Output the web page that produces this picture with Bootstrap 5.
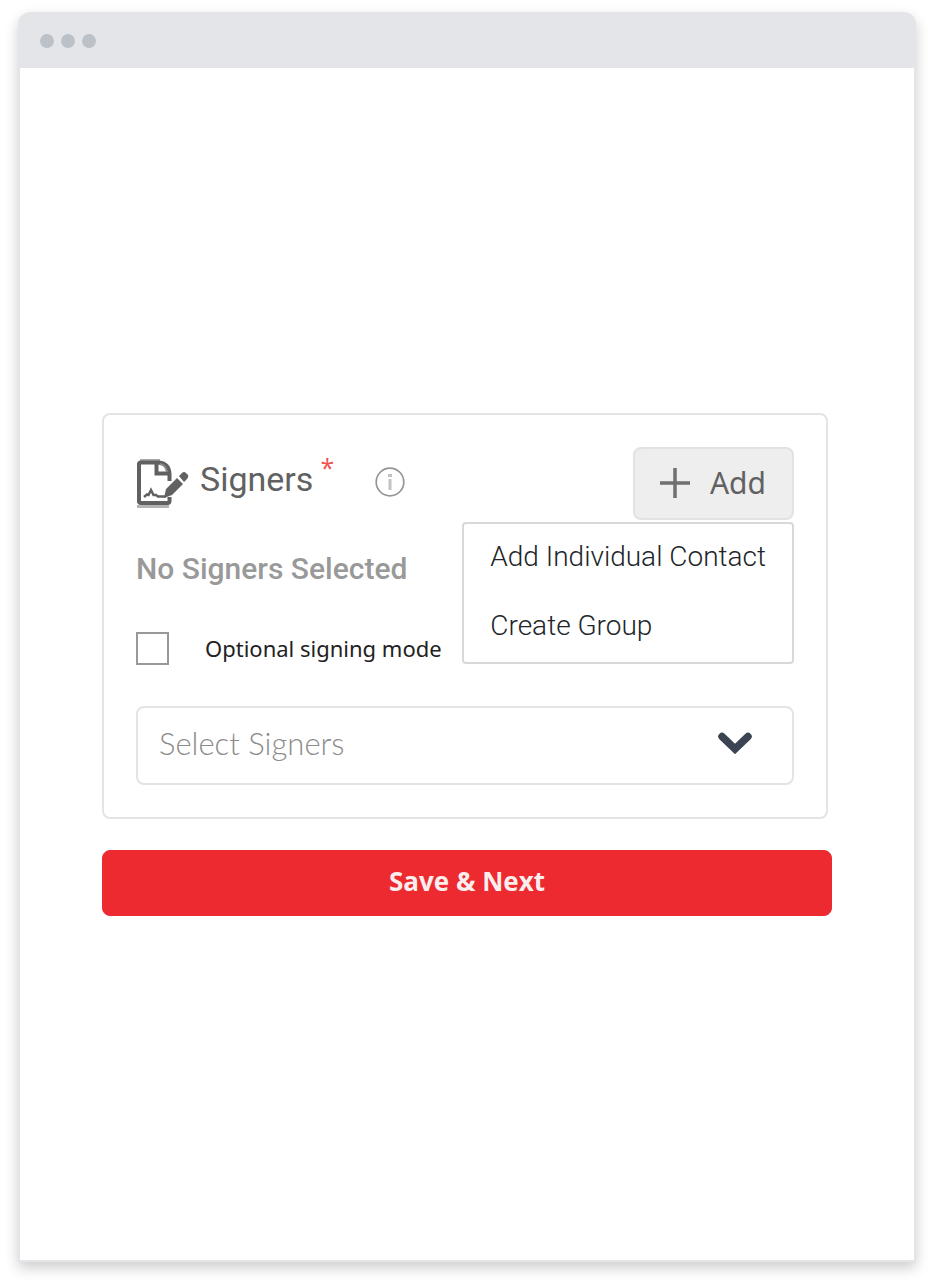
<!DOCTYPE html>
<html lang="en">
<head>
<meta charset="utf-8">
<meta name="viewport" content="width=device-width, initial-scale=1">
<title>Signers</title>
<link href="https://cdn.jsdelivr.net/npm/bootstrap@5.3.0/dist/css/bootstrap.min.css" rel="stylesheet">
<style>
  body { font-family: "Open Sans", "Noto Sans", sans-serif; background: #fff; }
  .page { min-height: 100vh; padding: 12px 18px 24px; }
  .window { border-radius: 12px 12px 0 0; border: 2px solid #e4e5e9; border-top: 0; box-shadow: 0 6px 14px rgba(0, 0, 0, .2); }
  .window-bar { height: 56px; background: #e4e5e9; padding: 2px 20px 0; gap: 7px; border-radius: 10px 10px 0 0; }
  .dot { width: 14px; height: 14px; background: #bcc1c8; }
  .window-body { padding: 32px 82px; gap: 31px; }
  .signers { border: 2px solid #e4e4e4; border-radius: 8px; padding: 32px; }
  .title-row { padding-top: 12px; }
  .heading { font-family: Roboto, sans-serif; font-size: 34px; line-height: 40px; color: #616161; margin-left: 11px; }
  .star { font-size: 25px; line-height: 16px; color: #ef5350; margin-left: 7px; }
  .info-icon { margin: 8px 0 0 41px; }
  .btn-add { font-family: "Noto Sans", sans-serif; font-size: 30px; line-height: 40px; padding: 14px 26px 15px 25px; gap: 20px; color: #616161; background: #eee; border: 2px solid #e2e2e2; border-radius: 8px; }
  .btn-add:hover, .btn-add.show { color: #616161 !important; background: #eee !important; border-color: #e2e2e2 !important; }
  .add-menu { top: 100%; right: 0; margin-top: 2px; padding: 0; border: 2px solid #d8d8d8; border-radius: 4px; }
  .add-menu .dropdown-item { font-family: Roboto, sans-serif; font-weight: 300; font-size: 28px; line-height: 36px; padding: 15px 26px 18px; color: #212529; }
  .empty-note { font-family: Roboto, sans-serif; font-size: 30px; line-height: 40px; color: #999; font-weight: 500; margin: 29px 0 43px; }
  .mode-box.form-check-input { width: 33px; height: 33px; border: 2px solid #999; border-radius: 0; margin: 0; }
  .mode-label { font-family: "Noto Sans", sans-serif; font-size: 22px; line-height: 33px; color: #222; margin-left: 36px; }
  .signer-select.form-select { font-family: Lato, sans-serif; font-weight: 300; font-size: 31px; line-height: 40px; margin-top: 41px; padding: 15px 72px 20px 21px; color: #8c8c8c; border: 2px solid #e4e4e4; border-radius: 8px;
    background-image: url("data:image/svg+xml,%3Csvg xmlns='http://www.w3.org/2000/svg' viewBox='0 0 34 22'%3E%3Cpath d='M4 4.500 17 17 30 4.500' fill='none' stroke='%233c4353' stroke-width='7.500' stroke-linecap='round'/%3E%3C/svg%3E"); background-size: 34px 22px; background-position: right 40px top 24px; }
  .btn-save { font-weight: 700; font-size: 26px; line-height: 36px; padding: 12px 14px 16px; color: #fdeeee; background: #ec2a30; border: 1px solid #ec2a30; border-radius: 8px; }
</style>
</head>
<body>
<div class="page d-flex flex-column">
  <main class="window d-flex flex-column flex-grow-1 bg-white">
    <div class="window-bar d-flex align-items-center">
      <span class="dot rounded-circle"></span>
      <span class="dot rounded-circle"></span>
      <span class="dot rounded-circle"></span>
    </div>
    <form class="window-body d-flex flex-column flex-grow-1 justify-content-center">
      <section class="signers me-1">
        <div class="d-flex justify-content-between align-items-start">
          <div class="title-row d-flex align-items-start">
            <svg width="53" height="50" viewBox="0 0 53 50" fill="none" aria-hidden="true">
              <path d="M1 47.500H33" stroke="#b4b4b4" stroke-width="3"/>
              <path d="M4 1H24" stroke="#aaa" stroke-width="2"/>
              <path d="M33.500 38V42Q33.500 44 31.500 44H5Q3 44 3 42V5Q3 3.500 5 3.500H22Q33 4 33.500 15V22" stroke="#616161" stroke-width="4"/>
              <path d="M20.500 4V14.500H33" stroke="#616161" stroke-width="4"/>
              <path d="M24 5Q30 6 31 13" stroke="#888" stroke-width="2"/>
              <path d="M8 38 11 35.500 12.500 36 15 31 17.500 36H20L22 37.500H30" stroke="#616161" stroke-width="2.500"/>
              <path d="M28 39 30 30 41 19 47 25 36 36Z M43 17 46 14Q48 12 50 14L52 16Q53 18 51 20L48 23Z" fill="#616161"/>
            </svg>
            <h1 class="heading mb-0 fw-normal">Signers</h1>
            <span class="star">*</span>
            <svg class="info-icon flex-shrink-0" width="30" height="30" viewBox="0 0 30 30" role="img" aria-label="Information">
              <circle cx="15" cy="15" r="13.800" fill="none" stroke="#959595" stroke-width="1.700"/>
              <path d="M15 7V10" stroke="#c2c2c2" stroke-width="4"/>
              <path d="M15 12V23" stroke="#c2c2c2" stroke-width="3"/>
            </svg>
          </div>
          <div class="position-relative">
            <button type="button" class="btn btn-add d-flex align-items-center" aria-expanded="true">
              <svg width="30" height="30" viewBox="0 0 30 30" aria-hidden="true"><path d="M15 0V30M0 15H30" stroke="#707070" stroke-width="3.500"/></svg>
              Add
            </button>
            <div class="dropdown-menu add-menu show">
              <a class="dropdown-item" href="#">Add Individual Contact</a>
              <a class="dropdown-item" href="#">Create Group</a>
            </div>
          </div>
        </div>
        <p class="empty-note">No Signers Selected</p>
        <div class="d-flex align-items-center">
          <input class="form-check-input mode-box" type="checkbox" id="mode">
          <label class="mode-label" for="mode">Optional signing mode</label>
        </div>
        <select class="form-select signer-select" aria-label="Select Signers">
          <option>Select Signers</option>
        </select>
      </section>
      <button type="button" class="btn btn-save w-100">Save &amp; Next</button>
    </form>
  </main>
</div>
<script src="https://cdn.jsdelivr.net/npm/bootstrap@5.3.0/dist/js/bootstrap.bundle.min.js"></script>
</body>
</html>
